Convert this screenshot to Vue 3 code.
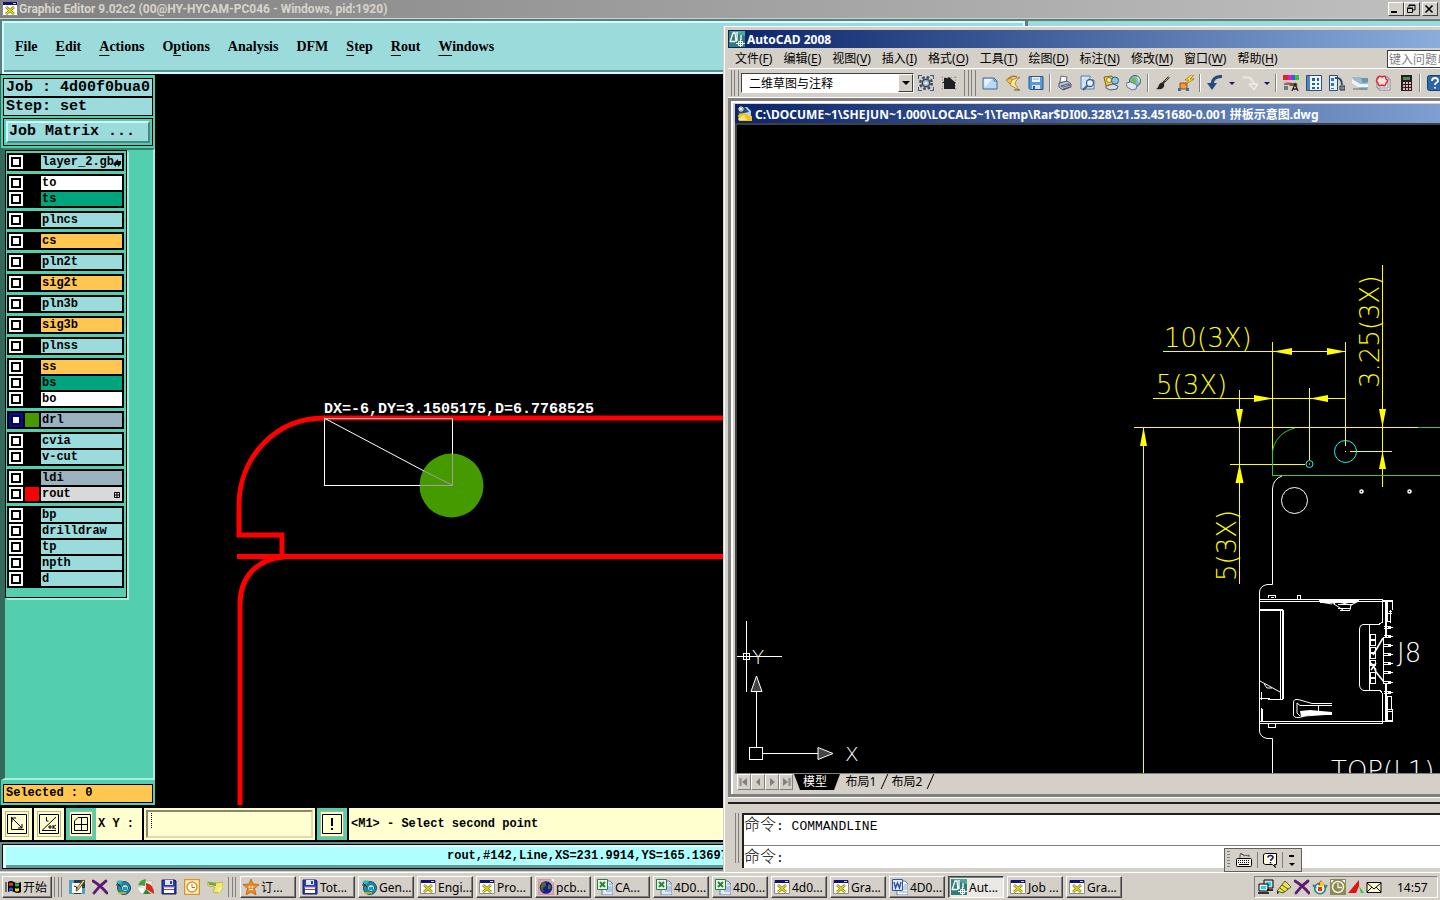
<template>
  <div class="desktop">
    <main class="workspace">
      <section class="editor">
        <header class="editor-title">
          <svg class="icon" viewBox="0 0 16 16" v-html="icons.xwin"></svg>
          <h1>Graphic Editor 9.02c2 (00@HY-HYCAM-PC046 - Windows, pid:1920)</h1>
          <div class="win-buttons">
            <button aria-label="Minimize"><svg viewBox="0 0 12 10"><path d="M2 8h6" stroke="#000" stroke-width="2" /></svg></button>
            <button aria-label="Restore"><svg viewBox="0 0 12 10"><path d="M4 3V1h6v5H8M4 1.5h6M2.5 4.500h5v4h-5zM2 4h6" fill="none" stroke="#000" /></svg></button>
            <button class="close" aria-label="Close"><svg viewBox="0 0 12 10"><path d="M2.500 1.500l7 7M9.500 1.500l-7 7" stroke="#000" stroke-width="1.600" /></svg></button>
          </div>
        </header>

        <div class="menu-row">
          <nav class="menubar">
            <button v-for="m in editorMenus" :key="m.join('')">{{ m[0] }}<u v-if="m[1]">{{ m[1] }}</u>{{ m[2] }}</button>
          </nav>
          <div class="menubar-side"></div>
        </div>

        <div class="editor-body">
          <aside class="sidebar">
            <div class="job-panel">
              <div class="job-line">Job : 4d00f0bua0</div>
              <div class="job-line">Step: set</div>
              <div class="matrix-frame">
                <button class="matrix-button">Job Matrix ...</button>
              </div>
            </div>
            <div class="layer-area">
              <div class="layer-panel">
                <div v-for="(group, g) in layerGroups" :key="g" class="layer-group">
                  <div v-for="layer in group" :key="layer.name" class="layer-row">
                    <input :id="'layer-' + layer.name" type="checkbox" :checked="layer.on" />
                    <span class="chip" :class="layer.chip"></span>
                    <label :for="'layer-' + layer.name" :class="layer.kind">{{ layer.name }}
                      <svg v-if="layer.mark === 'arrow'" class="mark" viewBox="0 0 8 8"><path d="M0 5l5-5v2h3v3L5 8V6H3v2z" fill="#000" /></svg>
                      <svg v-if="layer.mark === 'grid'" class="mark" viewBox="0 0 8 8"><path d="M1.500 1.500h5v5h-5zM4 1v6M1 4h6" fill="none" stroke="#000" /></svg>
                    </label>
                  </div>
                </div>
              </div>
            </div>
            <div class="selected-panel"><div class="selected-line">Selected : 0</div></div>
          </aside>

          <div class="editor-canvas">
            <svg width="1285" height="730" viewBox="155 75 1285 730">
              <g fill="none" stroke="#f00" stroke-width="5">
                <path d="M724 418H324C275 418 239 458 239 505V535H282V556M237 556.500H724M284 557C256 559 240 578 240 604V805" />
              </g>
              <circle cx="451.500" cy="485.500" r="32" fill="#459a00" />
              <g fill="none" stroke="#fff" shape-rendering="crispEdges">
                <path d="M324.500 418.500V485.500H420M452.500 418.500V454" />
                <path d="M324.500 418.500H452.500" stroke="#7cc" />
                <path d="M420 485.500H452.500V454" stroke="#a9a" />
              </g>
              <path d="M324 418L424 471" stroke="#fff" />
              <path d="M424 471L452 485" stroke="#a9a" />
              <text x="324" y="413" class="measure">DX=-6,DY=3.1505175,D=6.7768525</text>
            </svg>
          </div>
        </div>

        <div class="entry-row">
          <button class="tool" aria-label="Snap to vector">
            <svg viewBox="0 0 20 20"><path d="M.5.5h19v19H.5zM4.500 3v12.500H17M5 4l10 10M5 8V4h4M11 14h4v-4" fill="none" stroke="#000" /></svg>
          </button>
          <button class="tool" aria-label="Angle entry">
            <svg viewBox="0 0 20 20"><path d="M.5.5h19v19H.5zM17 3L3 16.500h14M7.500 3v4h2M10 12h2v2h-2zM14 11v4M17 11l-3 2 3 2" fill="none" stroke="#000" /></svg>
          </button>
          <button class="tool active" aria-label="Grid">
            <svg viewBox="0 0 20 20"><path d="M.5.5h19v19H.5zM7 3.500h9.500v13h-13V7L7 3.500M10.500 3.500v13M3.500 10.500h13" fill="none" stroke="#000" /></svg>
          </button>
          <label class="xy-label" for="xy">X Y :</label>
          <div class="xy-frame">
            <input id="xy" type="text" />
            <span class="caret"></span>
          </div>
          <button class="tool active" aria-label="Message">
            <svg viewBox="0 0 20 20"><path d="M.5.5h19v19H.5z" fill="none" stroke="#000" /><path d="M10 4v8M10 14v2" stroke="#000" stroke-width="2" /></svg>
          </button>
          <output class="message">&lt;M1&gt; - Select second point</output>
        </div>

        <div class="status-row">
          <div class="status-panel">rout,#142,Line,XS=231.9914,YS=165.13697,</div>
        </div>
      </section>

      <section class="acad">
        <header class="acad-title">
          <svg class="icon" viewBox="0 0 16 16" v-html="icons.acad"></svg>
          <h2>AutoCAD 2008</h2>
        </header>
        <div class="acad-menu">
          <nav>
            <button v-for="m in acadMenus" :key="m[0]">{{ m[0] }}(<u>{{ m[1] }}</u>)</button>
          </nav>
          <input class="help-box" type="text" aria-label="帮助" value="键入问题以寻求帮助" />
        </div>
        <div class="acad-toolbar">
          <span class="grip"></span>
          <div class="combo">
            <select aria-label="工作空间"><option>二维草图与注释</option></select>
            <span class="combo-arrow"></span>
          </div>
          <button class="tb" aria-label="工作空间设置"><svg viewBox="0 0 16 16" v-html="icons.gear"></svg></button>
          <button class="tb" aria-label="我的工作空间"><svg viewBox="0 0 16 16" v-html="icons.home"></svg></button>
          <span class="grip second"></span>
          <template v-for="(t, i) in toolbar" :key="i">
            <span v-if="t === '|'" class="tb-sep"></span>
            <button v-else-if="t === 'v'" class="tb-drop" aria-label="列表"></button>
            <button v-else class="tb" :aria-label="t"><svg viewBox="0 0 16 16" v-html="icons[t]"></svg></button>
          </template>
        </div>

        <div class="mdi">
          <div class="doc">
            <header class="doc-title">
              <svg class="icon" viewBox="0 0 16 16" v-html="icons.dwg"></svg>
              <h3>C:\DOCUME~1\SHEJUN~1.000\LOCALS~1\Temp\Rar$DI00.328\21.53.451680-0.001 拼板示意图.dwg</h3>
            </header>
            <div class="doc-canvas">
              <svg width="703" height="648" viewBox="737 125 703 648">
                <g fill="none" stroke="#ff0" shape-rendering="crispEdges">
                  <path d="M1163 351.500H1346M1153 398.500H1345M1272.500 342V450M1345.500 342V446M1309.500 388V460M1239.500 390V584" />
                  <path d="M1134 427.500H1418M1143.500 428V773M1230 464.500H1305M1382.500 265V487M1350 451.500H1392" />
                </g>
                <g fill="#ff0">
                  <path d="M1273 351.500l19-3.500v7zM1346 351.500l-19-3.500v7zM1273 398.500l-19-3.500v7zM1310 398.500l18-3.500v7z" />
                  <path d="M1239.500 427l-3.500-18h7zM1239.500 464l-4 19h8zM1382.500 427l-3.500-18h7zM1382.500 451l-3.500 18h7zM1143.500 427l-3.500 19h7z" />
                </g>
                <g class="cad-text yellow">
                  <text x="1164" y="347">10(3X)</text>
                  <text x="1156" y="394">5(3X)</text>
                  <text transform="translate(1379 388) rotate(-90)">3.25(3X)</text>
                  <text transform="translate(1236 581) rotate(-90)">5(3X)</text>
                </g>
                <g fill="none" stroke="#3c3">
                  <path d="M1295 428C1282 431 1273 441 1272.500 453" />
                  <path d="M1272.500 450V475.500H1440M1418 427.500H1440" shape-rendering="crispEdges" />
                </g>
                <g fill="none" stroke="#3ee">
                  <circle cx="1345.500" cy="451.500" r="11" />
                  <circle cx="1309.500" cy="464" r="3.500" />
                </g>
                <path d="M1345 451h1v1h-1zM1309 463.500h1v1h-1z" fill="#fff" />
                <g fill="none" stroke="#fff">
                  <path d="M1282 476Q1273 479 1272.500 489V584.500H1267Q1260 586 1259.500 592V731Q1260 737 1267 738.500H1272.500V773" />
                  <circle cx="1294.500" cy="500.500" r="13" />
                  <circle cx="1361.500" cy="491.500" r="1.500" stroke-width="1.600" />
                  <circle cx="1409.500" cy="491.500" r="1.500" stroke-width="1.600" />
                </g>
                <g fill="none" stroke="#fff" shape-rendering="crispEdges">
                  <path d="M1260 599.500H1383M1260 601.500H1382M1260 721.500H1383M1260 723.500H1383M1382.500 599V623M1382.500 694V724" />
                  <path d="M1268.500 598V595.500H1275.500V598M1271 597.500h3M1297.500 599V595.500H1300.500V599M1268.500 724V727.500H1275.500V724" />
                  <path d="M1260 609.500H1283M1260 610.500H1283M1280.500 611V699M1282.500 610V699M1283.500 610V699M1268 699.500H1283M1260 698.500H1270M1261.500 692V700M1261.500 708V722M1262.500 709V722" />
                  <path d="M1319 600.500H1359M1320 602.500H1356M1334.500 601V605M1338 604.500H1353M1338 608.500H1350M1340 610.500H1350" />
                  <path d="M1383 600.500H1393M1383 601.500H1393M1392.500 600V610M1385.500 600V637M1386.500 600V637M1387.500 600V622M1390.500 610V622.500M1385 621.500H1391M1388 613.500H1392M1389 611.500H1392" />
                  <path d="M1385.500 684V722M1386.500 684V722M1387.500 697V722M1385 696.500H1391.500V709M1392.500 709V722M1388 709.500H1392M1388 711.500H1392M1383 721.500H1393M1385 720.500H1393" />
                  <path d="M1383.500 637V684M1369.500 624V690M1363 624.500H1379L1382 622M1363 690.500H1380L1383 694" />
                  <path v-for="y in pinRows" :key="y" :d="`M1384 ${y - 1}.500H1391M1384 ${y + 1}.500H1391M1388 ${y}.500H1393`" />
                  <path v-for="y in padRows" :key="'p' + y" :d="`M1370.500 ${y}.500H1375.500V${y + 5}.500H1370.500Z`" />
                </g>
                <g fill="none" stroke="#fff">
                  <path d="M1363 624.500Q1359.500 625 1359.500 629V685Q1360 690 1364 690.500" />
                  <path d="M1383 638L1373 655M1373 664L1376 672L1384 682M1371 663l5 7M1376 663l-5 7" stroke-width="1.600" />
                  <path d="M1331 602L1343 610M1359 601L1351 605L1350 610M1338 602L1351 605M1320 602L1332 604" />
                  <path d="M1260 681L1280 692M1264 684l3 4h5" />
                  <path d="M1332 703.500H1312L1300 700Q1293 698 1293.500 703V714Q1293 718 1299 717.500L1305 716L1332 714M1332 705.500H1300L1297 703V713L1300 716M1318.500 705V711" />
                </g>
                <path d="M1300 711L1310 710L1332 712V715H1310L1301 717z" fill="#fff" />
                <g class="cad-text">
                  <text x="1397" y="662">J8</text>
                  <text x="1331" y="780">TOP(L1)</text>
                </g>
                <g class="ucs-text">
                  <text x="845" y="761">X</text>
                  <text x="752" y="664">Y</text>
                </g>
                <g fill="none" stroke="#fff" shape-rendering="crispEdges">
                  <path d="M746.500 621V692M737 656.500H782M743.500 653.500H749.500V659.500H743.500zM756.500 691V747M762 753.500H818M749.500 747.500H762.500V759.500H749.500z" />
                </g>
                <path d="M756.500 676l-5.500 15.500h11zM833 753.500l-15-6v12z" fill="#444" stroke="#fff" />
              </svg>
            </div>
            <div class="tabs">
              <button class="nav-btn" aria-label="第一个"><svg viewBox="0 0 12 12"><path d="M2 2v8M3 2v8" stroke="#808080" /><path d="M9 2v8L4 6z" fill="#808080" /></svg></button>
              <button class="nav-btn" aria-label="上一个"><svg viewBox="0 0 12 12"><path d="M8 2v8L4 6z" fill="#808080" /></svg></button>
              <button class="nav-btn" aria-label="下一个"><svg viewBox="0 0 12 12"><path d="M4 2v8l5-4z" fill="#808080" /></svg></button>
              <button class="nav-btn" aria-label="最后一个"><svg viewBox="0 0 12 12"><path d="M10 2v8M9 2v8" stroke="#808080" /><path d="M3 2v8l5-4z" fill="#808080" /></svg></button>
              <button class="tab current">模型</button>
              <button class="tab">布局1</button>
              <button class="tab">布局2</button>
            </div>
          </div>
        </div>

        <div class="cmd">
          <span class="grip"></span>
          <div class="cmd-box">
            <div class="cmd-log"><span class="han">命令</span>: COMMANDLINE</div>
            <div class="cmd-line"><label for="cmd"><span class="han">命令</span>:</label><input id="cmd" type="text" /></div>
          </div>
        </div>
      </section>

      <div class="langbar">
        <span class="dots"></span>
        <button aria-label="键盘"><svg viewBox="0 0 16 16" v-html="icons.keyboard"></svg></button>
        <button aria-label="帮助"><svg viewBox="0 0 16 16" v-html="icons.imehelp"></svg></button>
        <button class="narrow" aria-label="选项"><svg viewBox="0 0 16 16"><path d="M5 4h5" stroke="#000" stroke-width="2" /><path d="M5 11h6l-3 3z" /></svg></button>
      </div>
    </main>

    <footer class="taskbar">
      <button class="start">
        <svg class="icon" viewBox="0 0 16 16" v-html="icons.windows"></svg>开始
      </button>
      <span class="task-sep"></span>
      <div class="quick">
        <a v-for="q in quickLaunch" :key="q" href="#" :aria-label="q"><svg viewBox="0 0 16 16" v-html="icons[q]"></svg></a>
      </div>
      <span class="task-sep"></span>
      <div class="tasks">
        <button v-for="(t, i) in tasks" :key="i" class="task" :class="{ pressed: t.active }">
          <svg class="icon" viewBox="0 0 16 16" v-html="icons[t.icon]"></svg>{{ t.label }}
        </button>
      </div>
      <div class="tray">
        <svg v-for="t in tray" :key="t" viewBox="0 0 16 16" v-html="icons[t]"></svg>
        <time>14:57</time>
      </div>
    </footer>
  </div>
</template>

<script setup>
// [before, underlined letter, after]
const editorMenus = [
  ['', 'F', 'ile'],
  ['', 'E', 'dit'],
  ['', 'A', 'ctions'],
  ['O', 'p', 'tions'],
  ['Analysis', '', ''],
  ['DFM', '', ''],
  ['', 'S', 'tep'],
  ['', 'R', 'out'],
  ['', 'W', 'indows']
]

const acadMenus = [
  ['文件', 'F'],
  ['编辑', 'E'],
  ['视图', 'V'],
  ['插入', 'I'],
  ['格式', 'O'],
  ['工具', 'T'],
  ['绘图', 'D'],
  ['标注', 'N'],
  ['修改', 'M'],
  ['窗口', 'W'],
  ['帮助', 'H']
]

const layerGroups = [
  [{ name: 'layer_2.gb', kind: 'misc', mark: 'arrow' }],
  [{ name: 'to', kind: 'silk' }, { name: 'ts', kind: 'mask' }],
  [{ name: 'plncs', kind: 'misc' }],
  [{ name: 'cs', kind: 'signal' }],
  [{ name: 'pln2t', kind: 'misc' }],
  [{ name: 'sig2t', kind: 'signal' }],
  [{ name: 'pln3b', kind: 'misc' }],
  [{ name: 'sig3b', kind: 'signal' }],
  [{ name: 'plnss', kind: 'misc' }],
  [{ name: 'ss', kind: 'signal' }, { name: 'bs', kind: 'mask' }, { name: 'bo', kind: 'silk' }],
  [{ name: 'drl', kind: 'drill', chip: 'green', on: true }],
  [{ name: 'cvia', kind: 'misc' }, { name: 'v-cut', kind: 'misc' }],
  [{ name: 'ldi', kind: 'drill' }, { name: 'rout', kind: 'rout', chip: 'red', mark: 'grid' }],
  [
    { name: 'bp', kind: 'misc' },
    { name: 'drilldraw', kind: 'misc' },
    { name: 'tp', kind: 'misc' },
    { name: 'npth', kind: 'misc' },
    { name: 'd', kind: 'misc' }
  ]
]

const pinRows = [627, 636, 645, 654, 663, 672, 682, 692]
const padRows = [634, 640, 647, 653, 660, 672, 678]

const toolbar = [
  'new', 'open', 'floppy', '|', 'print', 'preview', 'publish', 'web', '|',
  'brush', 'match', '|', 'undo', 'v', 'redo', 'v', '|',
  'palette', 'center', 'toolpal', 'sheet', 'markup', 'calc', '|', 'help'
]

const quickLaunch = ['notes', 'cross', 'genesis', 'pinwheel', 'disk', 'clock', 'sticky']

const tasks = [
  { label: '订...', icon: 'star' },
  { label: 'Tot...', icon: 'disk' },
  { label: 'Gen...', icon: 'genesis' },
  { label: 'Engi...', icon: 'xwin' },
  { label: 'Pro...', icon: 'xwin' },
  { label: 'pcb...', icon: 'globe' },
  { label: 'CA...', icon: 'excel' },
  { label: '4D0...', icon: 'excel' },
  { label: '4D0...', icon: 'excel' },
  { label: '4d0...', icon: 'xwin' },
  { label: 'Gra...', icon: 'xwin' },
  { label: '4D0...', icon: 'word' },
  { label: 'Aut...', icon: 'acad', active: true },
  { label: 'Job ...', icon: 'xwin' },
  { label: 'Gra...', icon: 'xwin' }
]

const tray = ['network', 'pencil', 'cross', 'teapot', 'clock2', 'flag', 'mail']

const icons = {
  xwin: '<path d="M0 1h16v14H0z" fill="#fff"/><path d="M.5 1.500h15v13H.5z" fill="none" stroke="#8a8a8a"/><path d="M1 1h14v3H1z" fill="#10107a"/><path d="M11 2h3v1h-3z" fill="#ccc"/><path d="M4 6l8 7M12 6l-8 7" stroke="#7a7200" stroke-width="2.600"/><path d="M4 6l8 7M12 6l-8 7" stroke="#e6dc28" stroke-width="1.400"/>',
  acad: '<path d="M0 0h16v16H0z" fill="#2f7f78"/><path d="M0 0h16v5L9 3z" fill="#4fa89f"/><path d="M1 11L4 2h2l1 9M1 10.500h5M8 1v9M12 4v5" fill="none" stroke="#fff" stroke-width="1.300"/><path d="M11.500 8v8M7 12.500h9M9.500 10.500h4v4h-4z" fill="none" stroke="#fff"/>',
  dwg: '<path d="M2 1h8l4 4v10H2z" fill="#b9d4ee"/><path d="M1 9l6-3 3 3 5 1v5H2z" fill="#f5c21c"/><path d="M1 13l6-4 3 5H2z" fill="#ffe675"/><path d="M8 1l4 5-5 1-6 1 2-7z" fill="#2c4c74"/><path d="M4 0v6M1 3h6M2 1l4 4M6 1L2 5" stroke="#fff"/>',
  gear: '<path d="M0 0h4v1H1v3H0zM12 0h4v4h-1V1h-3zM0 12h1v3h3v1H0zM15 12h1v4h-4v-1h3z" fill="#2d5f94"/><circle cx="8" cy="8" r="5.800" fill="none" stroke="#3b4a5b" stroke-width="2.400" stroke-dasharray="2.600 1.950"/><circle cx="8" cy="8" r="3.800" fill="#9fb9d0" stroke="#3b4a5b" stroke-width="1.500"/><circle cx="8" cy="8" r="1.600" fill="#e8eef4"/>',
  home: '<path d="M1.500 1v14M14.500 1v14M0 2.500h16M0 13.500h16" stroke="#aaa" stroke-dasharray="2 1"/><path d="M8 2l7 6h-1v6H3V8H1z" fill="#1d1f22"/><path d="M3 3h3v4H3z" fill="#1d1f22"/>',
  new: '<path d="M1 3h11l3 3v8H1z" fill="#b7d9f5" stroke="#3d6a9c"/><path d="M2 4h8L3 12z" fill="#e9f5ff"/><path d="M12 3l3 3h-3z" fill="#fff" stroke="#3d6a9c"/>',
  open: '<path d="M1 5l4-2 3 2 3 8-5-3z" fill="#f1c643" stroke="#9b7420" stroke-width=".8"/><path d="M7 5l8-3-4 4-1 3 4 6-9-5z" fill="#ffe9a0" stroke="#a97d1d" stroke-width=".8"/><path d="M3 4q4-4 9-2" fill="none" stroke="#b07a18" stroke-width="1.500"/><path d="M9 15l6 0" stroke="#555"/>',
  floppy: '<path d="M1 1.500h14v13H2l-1-1z" fill="#5c9bd0" stroke="#1f5a93"/><path d="M4 2h8v5H4z" fill="#eef6fc"/><path d="M4 10h8v4H4z" fill="#d7e3ec"/><path d="M5 11h2v3H5z" fill="#2c5d8c"/><path d="M5 4h6" stroke="#9ab"/>',
  print: '<path d="M4 1l6 1-1 6-6-1z" fill="#fff" stroke="#667"/><path d="M2 8l8-2 4 3v3l-8 3-4-3z" fill="#b9bed2" stroke="#4d5375"/><path d="M4 11l7-2 2 1-7 2zM6 14l7-2" fill="#eef" stroke="#4d5375"/>',
  preview: '<path d="M1 1h9l4 4v9H1z" fill="#cfe4f7" stroke="#5d7fa8"/><path d="M10 1v4h4" fill="#fff" stroke="#5d7fa8"/><circle cx="10" cy="8" r="3.500" fill="#e8f5ff" stroke="#3c6288" stroke-width="1.300"/><path d="M7.500 10.500L3 15" stroke="#3c6288" stroke-width="2"/>',
  publish: '<path d="M1 2l8-1 2 8-8 2z" fill="#f6c932" stroke="#8b641b"/><circle cx="6" cy="5" r="2.500" fill="#fff3a0" stroke="#7d8a3c"/><circle cx="12" cy="5.500" r="3.500" fill="#8cc4e6" stroke="#28618f"/><path d="M3 11l7-2 5 2-1 3-7 1-4-2z" fill="#d9dbe6" stroke="#555b78"/>',
  web: '<circle cx="9" cy="6" r="5.500" fill="#7bbde0" stroke="#2d6593"/><path d="M6 2q5 1 4 5t-3 3q-3-3-1-8z" fill="#7ab84c"/><path d="M11 2q3 2 2 5" stroke="#e5eb8b" fill="none" stroke-width="1.500"/><path d="M0 8l5-1 6 3-1 4-4 1-5-3z" fill="#e3e6ec" stroke="#63799b"/>',
  brush: '<path d="M14 2L7 9" stroke="#453219" stroke-width="2.200"/><path d="M8 8q-3-1-4 2t-3 4q5 1 7-1t1-4z" fill="#28241f"/><path d="M14 2l-4 4" stroke="#b09366"/>',
  match: '<path d="M2 8h7v6H2z" fill="#f29a3d" stroke="#a34b10"/><path d="M13 0L7 5h4L7 10l9-6h-4l4-4z" fill="#ffe04a" stroke="#a5720e" stroke-width=".8"/><path d="M0 13h3v3H0zM8 13h3v3H8z" fill="#2573b9"/>',
  undo: '<path d="M15 1.500Q6 1 5 9" fill="none" stroke="#244b86" stroke-width="3"/><path d="M0 8h10l-5 7z" fill="#244b86"/>',
  redo: '<path d="M1 2.500Q10 1 12 9" fill="none" stroke="#e6e4df" stroke-width="2.500"/><path d="M7 9h9l-4 6z" fill="#d9d6cf" stroke="#f8f8f6"/>',
  palette: '<path d="M0 0h5v5H0z" fill="#e32222"/><path d="M5 0h4v5H5z" fill="#c527d8"/><path d="M9 0h3v5H9z" fill="#2c62e8"/><path d="M12 0h4v5h-4z" fill="#39c42e"/><path d="M1 6l9 2 5 1-1 3-6-2z" fill="#c98e67"/><path d="M4 8h10v3H7z" fill="#84543a"/><path d="M1 9h4M1 12h4M1 14h4" stroke="#557" stroke-width="1.300"/><path d="M9 16l3-7 3 7M10 14h4" fill="none" stroke="#222" stroke-width="1.300"/>',
  center: '<path d="M.5.5h15v15H.5z" fill="#eef5fb" stroke="#2b4e7b"/><path d="M1 1h3v14H1z" fill="#4d84bb"/><path d="M6 3h3v3H6zM11 3h2v3h-2zM6 8h3v2H6zM11 8h2v2h-2zM6 12h3v2H6zM11 12h2v2h-2z" fill="#2c5d91"/>',
  toolpal: '<path d="M.5.5h8v15h-8z" fill="#e2eefa" stroke="#2b4e7b"/><path d="M2 3h3v3H2zM2 8h3v3H2zM2 13h3v1H2z" fill="#3b73ad"/><path d="M6 3q7-1 7 7" fill="none" stroke="#26466f" stroke-width="1.800"/><path d="M11 11h5v4h-5z" fill="#7a8ea3" stroke="#333"/>',
  sheet: '<path d="M0 2h8l8 5v8H8z" fill="#9db8cb"/><path d="M0 4l8 5h8v3H6L0 8z" fill="#eff5f8"/><path d="M9 3h7v4l-5 1z" fill="#6995b2"/><path d="M1 14h14" stroke="#577" />',
  markup: '<path d="M4 4h11v11H4z" fill="#fff" stroke="#889"/><path d="M2 2h11v11H2z" fill="#f7f7f7" stroke="#889"/><path d="M3 3q1-3 4-1 4-2 4 2 3 2 0 4 0 4-4 2-4 2-4-2-3-2 0-5z" fill="#fbe2e2" stroke="#d02a2a" stroke-width="1.500"/>',
  calc: '<path d="M3 0h11v16H3z" fill="#2a1c1c"/><path d="M5 2h7v3H5z" fill="#4c8a5d"/><path d="M5 7h2v2H5zM8 7h2v2H8zM11 7h2v2h-2zM5 10h2v2H5zM8 10h2v2H8zM11 10h2v2h-2zM5 13h2v2H5zM8 13h2v2H8zM11 13h2v2h-2z" fill="#d9b9b9"/>',
  help: '<rect x=".5" y=".5" width="15" height="15" rx="2" fill="#2c67a9" stroke="#174273"/><path d="M5 6q0-3 3-3t3 3q0 1-2 2-1 1-1 2M8 12v1.500" fill="none" stroke="#fff" stroke-width="1.800"/>',
  keyboard: '<path d="M4 6V3l1-2 1 2 1-1 1 2 2-1 1 1 2-1v2" fill="none" stroke="#222" stroke-width=".7"/><rect x=".5" y="6.500" width="15" height="8" rx="1" fill="#f4f4ee" stroke="#000"/><path d="M2 8.500h12M2 10.500h12" stroke="#000" stroke-dasharray="1 1"/><path d="M3 12.500h10" stroke="#000"/>',
  imehelp: '<path d="M3.500 1.500h11v11h-2l1 3-3-3h-7l-2-1v-9z" fill="#ffffdf" stroke="#000"/><path d="M6 5.500q0-2 2.500-2t2.500 2q0 1-2 2.200V9M8.500 10v1.500" fill="none" stroke="#14147c" stroke-width="1.600"/>',
  windows: '<path d="M0 4h2M0 6h2M0 8h2M0 10h2M0 12h2" stroke="#000"/><path d="M3 3q3-2 6 0v10q-3-2-6 0zM9 3q3 2 7 0v10q-3 2-7 0z" fill="#000"/><path d="M4 4q2-1 4 0v3q-2-1-4 0z" fill="#e2371d"/><path d="M10 4q2 1 4 0v3q-2 1-4 0z" fill="#2fae2f"/><path d="M4 9q2-1 4 0v3q-2-1-4 0z" fill="#2b50d8"/><path d="M10 9q2 1 4 0v3q-2 1-4 0z" fill="#f5d916"/>',
  notes: '<path d="M0 1h16v14H0z" fill="#1c3e5a"/><path d="M0 1h5v14H0zM12 9h4v6h-4z" fill="#4f9fc9"/><path d="M3 4h10v10H3z" fill="#fdf9e4"/><path d="M14 1l2 1-7 9-2 1 1-3z" fill="#f7d36c" stroke="#4c3a12" stroke-width=".8"/><path d="M5 7q3 0 3 3" fill="none" stroke="#222"/>',
  cross: '<path d="M1 2q7 4 14 12M14 2Q7 7 2 14" fill="none" stroke="#5e1a70" stroke-width="2.800" stroke-linecap="round"/>',
  genesis: '<circle cx="9" cy="9" r="6.500" fill="#1d8e98" stroke="#114e6b"/><circle cx="10" cy="9" r="3.500" fill="#bfeef0" stroke="#1c55a5"/><path d="M8 8h4v3H8z" fill="#18a2a8"/><path d="M1 3q3-3 7-1L5 6z" fill="#34b7c0"/><path d="M2 4l4 4M1 6h4" stroke="#123" /><path d="M3 14h8" stroke="#d7b42a" stroke-width="1.500"/>',
  pinwheel: '<path d="M2 2h12v12H2z" fill="#f3f1ea" stroke="#aaa" stroke-width=".6"/><path d="M8 0L7 7 0 6q2-5 8-6z" fill="#3fa335"/><path d="M8 4q8 1 8 11l-8-5z" fill="#da2a1c"/><path d="M0 8l7 1-2 6q-5-2-5-7z" fill="#fff" stroke="#c9c9c9" stroke-width=".5"/><path d="M5 15l3-5 5 5z" fill="#2d8a2a"/>',
  disk: '<path d="M1 1h13l1 1v13H1z" fill="#2a3ba8" stroke="#131d68"/><path d="M4 1h8v5H4z" fill="#dfe4f4"/><path d="M9 2h2v3H9z" fill="#2a3ba8"/><path d="M3 8h10v6H3z" fill="#fff"/><path d="M3 10.500h10" stroke="#cf2d2d"/><path d="M2 8h12" stroke="#7d8ce0"/>',
  clock: '<rect x=".5" y=".5" width="15" height="15" rx="1" fill="#fdf0cf" stroke="#dc951b" stroke-width="1.600"/><circle cx="8" cy="8" r="5" fill="#fff" stroke="#dc951b" stroke-width="1.500"/><path d="M8 5v3.500h3" fill="none" stroke="#b8740a"/>',
  sticky: '<path d="M0 3l9 1 7-1v6l-4 5-6-1 2-5-7-1z" fill="#f4ea6a" stroke="#b1a238" stroke-width=".7"/><path d="M1 3l8 1v3L2 6z" fill="#6fa847"/><path d="M12 14l4-6-5 2z" fill="#fff7ab"/>',
  star: '<path d="M8 0l2 5 6 .5-4.500 4L13 16l-5-3-5 3 1.500-6.500L0 5.500 6 5z" fill="#f08a24" stroke="#b3530c" stroke-width=".7"/><circle cx="6.500" cy="8" r=".9" fill="#fff"/><circle cx="9.500" cy="8" r=".9" fill="#fff"/><path d="M6 10.500h4" stroke="#fff"/>',
  globe: '<path d="M0 0h16v16H0z" fill="#c7b4b4"/><path d="M.5.5h15v15H.5z" fill="none" stroke="#e28f8f"/><circle cx="8" cy="8.500" r="6.300" fill="#14208f"/><path d="M4 4q4-2 4 1t-2 3 0 5q-4-2-3-6zM10 6q3-1 3 2t-3 2z" fill="#5a6b1d"/><path d="M13 0h3v4z" fill="#fff"/>',
  excel: '<path d="M5 2h8l3 3v11H5z" fill="#dfe9f8" stroke="#5f7fae"/><path d="M12 5h3M9 8h6M9 10h6M9 12h6" stroke="#86a2c9"/><path d="M.5.5h10v10H.5z" fill="#e9f5e7" stroke="#2f7d3a"/><path d="M3 3l5 5M8 3L3 8" stroke="#23823a" stroke-width="1.900"/>',
  word: '<path d="M5 2h8l3 3v11H5z" fill="#fff" stroke="#5f7fae"/><path d="M12 6h3M11 8h4M11 10h4M7 13h8" stroke="#86a2c9"/><path d="M.5.5h10v11H.5z" fill="#e4ecfb" stroke="#2b55a8"/><path d="M2 3l1.500 6 2-5 2 5L9 3" fill="none" stroke="#2b4fa5" stroke-width="1.400"/>',
  network: '<path d="M6 1h9v8H6z" fill="#d8d8d8" stroke="#000"/><path d="M8 3h5v4H8z" fill="#19d5e8"/><path d="M1 5h9v7H1z" fill="#e8e8e8" stroke="#000"/><path d="M3 7h5v3H3z" fill="#19d5e8"/><path d="M0 14h11M9 11h6" stroke="#000" stroke-width="1.500"/>',
  pencil: '<path d="M1 12L9 2l6 6-8 6z" fill="#ece24a" stroke="#5e5610"/><path d="M4 9l5 4M6 6l6 4" stroke="#5e5610"/><path d="M1 12l2 2-2 1z" fill="#000"/><path d="M10 4l4 4" stroke="#fff"/>',
  teapot: '<circle cx="8" cy="9.500" r="5.300" fill="#f4efc9" stroke="#18878a" stroke-width="1.600"/><path d="M6 6l3-5 1 6z" fill="#e32b1e"/><path d="M8 3h4v4H8z" fill="#f2c624"/><path d="M1 6l3 3M15 6l-2 3" stroke="#18878a" stroke-width="2"/><path d="M6 8h4v4H6z" fill="#d3401f"/>',
  clock2: '<path d="M0 0h16v16H0z" fill="#8b8a54"/><circle cx="8" cy="8" r="5.500" fill="#8b8a54" stroke="#f1f0dc" stroke-width="1.500"/><path d="M8 4v4.500h4" fill="none" stroke="#f1f0dc" stroke-width="1.300"/><path d="M1 1h3L1 4zM15 1h-3l3 3z" fill="#fff"/>',
  flag: '<path d="M11 1v6l-3 7H0z" fill="#e01414"/><path d="M11 7l5 7h-3z" fill="#22c933"/>',
  mail: '<path d="M1 3.500h14v10H1z" fill="#fff8c9" stroke="#000"/><path d="M1 4l7 6 7-6M1 13l5-5M15 13l-5-5" fill="none" stroke="#000"/>'
}
</script>

<style>
body {
  background: #000;
}
</style>

<style scoped>
.desktop {
  display: flex;
  flex-direction: column;
  height: 100vh;
  overflow: hidden;
  font-family: "Noto Sans", "Noto Sans CJK SC", sans-serif;
  font-size: 12px;
  color: #000;
}

button,
input,
select {
  font: inherit;
  color: inherit;
  margin: 0;
  padding: 0;
  border: 0;
  border-radius: 0;
  background: none;
  box-sizing: border-box;
}

h1,
h2,
h3 {
  margin: 0;
  font-size: 12px;
  font-weight: 700;
  white-space: nowrap;
}

svg {
  display: block;
  flex: none;
}

.icon {
  width: 16px;
  height: 16px;
}

.workspace {
  position: relative;
  flex: 1;
  min-height: 0;
}

/* graphic editor */
.editor {
  display: flex;
  flex-direction: column;
  height: 100%;
  font-family: "Liberation Mono", monospace;
  font-weight: 700;
}

.editor-title {
  display: flex;
  align-items: center;
  gap: 1px;
  height: 18px;
  padding: 0 2px;
  background: linear-gradient(90deg, #808080, #c0c0c0);
  color: #d8d4cc;
  font-family: Roboto, sans-serif;
}

.editor-title h1 {
  flex: 1;
}

.win-buttons {
  display: flex;
}

.win-buttons button {
  width: 16px;
  height: 14px;
  background: #d4d0c8;
  border: 1px solid;
  border-color: #fff #404040 #404040 #fff;
}

.win-buttons svg {
  width: 12px;
  height: 10px;
}

.win-buttons .close {
  margin-left: 2px;
}

.menu-row {
  display: flex;
  gap: 3px;
  height: 57px;
  background: #5d7f7f;
  border-top: 1px solid #d4d0c8;
  border-bottom: 1px solid #000;
  box-sizing: border-box;
  padding: 2px 0 0 2px;
}

.menubar {
  flex: 1;
  display: flex;
  align-items: center;
  gap: 18px;
  padding: 0 0 1px 11px;
  background: #9bdbdb;
  border: 2px solid #cff;
  box-shadow: inset 0 -2px #5d8f8f;
  font-family: "Liberation Serif", serif;
  font-size: 14px;
}

.menubar u {
  text-underline-offset: 4px;
}

.menubar-side {
  width: 412px;
  background: #9bdbdb;
}

.editor-body {
  flex: 1;
  display: flex;
  min-height: 0;
}

.sidebar {
  display: flex;
  flex-direction: column;
  width: 155px;
  background: #53cfb0;
  box-sizing: border-box;
  border-left: 1px solid #2f6b5c;
}

.job-panel {
  padding: 3px 2px 2px;
  font-size: 15px;
}

.job-line {
  height: 19px;
  box-sizing: border-box;
  border: 1px solid #000;
  padding-left: 2px;
  line-height: 17px;
  background: #9bdbdb;
  white-space: nowrap;
}

.matrix-frame {
  margin-top: 2px;
  padding: 2px;
  border: 1px solid #000;
}

.matrix-button {
  display: block;
  width: 100%;
  height: 22px;
  padding-left: 1px;
  text-align: left;
  line-height: 18px;
  background: #9bdbdb;
  border: 2px solid;
  border-color: #cff #4d8585 #4d8585 #cff;
}

.layer-area {
  flex: 1;
  border-top: 2px solid #2f7f6b;
  border-left: 4px solid #35695c;
  border-right: 2px solid #a6efdc;
  border-bottom: 2px solid #a6efdc;
}

.layer-panel {
  display: flex;
  flex-direction: column;
  gap: 3px;
  width: 117px;
  padding: 2px 2px 9px 1px;
  border: 1px solid #000;
  box-shadow: 1px 1px #a6efdc, 2px 2px #a6efdc;
}

.layer-group {
  display: flex;
  flex-direction: column;
  background: #000;
  padding: 1px 2px 1px 2px;
}

.layer-row {
  display: flex;
  align-items: center;
  gap: 2px;
  height: 16px;
}

.layer-row input {
  appearance: none;
  width: 14px;
  height: 14px;
  border: 2px solid #fff;
  background: #fff;
  box-shadow: inset 0 0 0 2px #000;
}

.layer-row input:checked {
  border-color: #0a0a96;
  box-shadow: inset 0 0 0 2px #06065c;
}

.chip {
  width: 14px;
  height: 14px;
}

.chip.green {
  background: #459a00;
}

.chip.red {
  background: #f00;
}

.layer-row label {
  flex: 1;
  position: relative;
  height: 14px;
  padding-left: 1px;
  line-height: 14px;
  font-size: 12px;
  white-space: nowrap;
}

.misc {
  background: #9bdbdb;
}

.silk {
  background: #fff;
}

.mask {
  background: #00a57d;
}

.signal {
  background: #ffc74f;
}

.drill {
  background: #9bb3bf;
}

.rout {
  background: #d9d9d9;
}

.mark {
  position: absolute;
  right: 1px;
  top: 4px;
  width: 8px;
  height: 8px;
}

.selected-panel {
  padding: 4px 2px 2px;
}

.selected-line {
  height: 19px;
  box-sizing: border-box;
  border: 1px solid #000;
  padding-left: 2px;
  line-height: 17px;
  background: #ffc74f;
}

.editor-canvas {
  flex: 1;
  overflow: hidden;
  background: #000;
}

.measure {
  fill: #fff;
  font-size: 15px;
}

.entry-row {
  display: flex;
  gap: 2px;
  height: 37px;
  box-sizing: border-box;
  padding: 3px 0 2px 2px;
  background: #000;
}

.tool {
  display: flex;
  align-items: center;
  justify-content: center;
  width: 30px;
  background: #ffffcf;
  border: 3px solid #ffffcf;
  box-shadow: inset 0 0 0 1px #b5b58a;
}

.tool.active {
  border-color: #53cfb0;
}

.tool svg {
  width: 20px;
  height: 20px;
}

.xy-label {
  width: 46px;
  margin: 0 0 0 -2px;
  padding-left: 2px;
  box-sizing: border-box;
  background: #ffffcf;
  line-height: 32px;
}

.xy-frame {
  position: relative;
  width: 171px;
  box-sizing: border-box;
  padding: 2px;
  background: #ffffcf;
}

.xy-frame input {
  width: 100%;
  height: 100%;
  padding-left: 8px;
  border: 2px solid;
  border-color: #8a8a6a #dcdcb0 #dcdcb0 #8a8a6a;
}

.caret {
  position: absolute;
  left: 7px;
  top: 5px;
  height: 15px;
  border-left: 1px dotted #000;
}

.message {
  flex: 1;
  padding-left: 2px;
  line-height: 32px;
  background: #ffffcf;
}

.status-row {
  height: 30px;
  box-sizing: border-box;
  padding: 2px 0 2px 2px;
  background: #6c8c8c;
  border-bottom: 1px solid #d4d0c8;
}

.status-panel {
  height: 25px;
  box-sizing: border-box;
  border: 1px solid #000;
  border-right: 0;
  padding-left: 444px;
  line-height: 23px;
  background: #b0ffff;
  box-shadow: inset 3px 2px #d8ffff, inset 0 -3px #5f9b9b;
  white-space: nowrap;
}

/* AutoCAD */
.acad {
  position: absolute;
  left: 723px;
  right: 0;
  top: 26px;
  bottom: 0;
  display: flex;
  flex-direction: column;
  overflow: hidden;
  box-sizing: border-box;
  padding: 4px 0 0 4px;
  background: #d4d0c8;
  border-left: 1px solid #d4d0c8;
  box-shadow: inset 1px 1px #fff;
}

.acad-title {
  display: flex;
  align-items: center;
  gap: 2px;
  height: 18px;
  padding-left: 1px;
  background: linear-gradient(90deg, #0a246a, #8aaddc);
  color: #fff;
}

.acad-menu {
  display: flex;
  justify-content: space-between;
  height: 20px;
}

.acad-menu nav {
  display: flex;
  align-items: center;
  gap: 11px;
  padding-left: 7px;
}

.acad-menu u {
  text-underline-offset: 2px;
}

.help-box {
  width: 53px;
  height: 18px;
  margin-top: 2px;
  padding-left: 1px;
  background: #fff;
  border: 1px solid #404040;
  border-right: 0;
  color: #808080;
}

.acad-toolbar {
  display: flex;
  align-items: center;
  height: 28px;
  padding-left: 2px;
  border-top: 1px solid #fff;
  border-bottom: 1px solid #fff;
}

.grip {
  flex: none;
  width: 4px;
  height: 26px;
  box-sizing: border-box;
  margin: 0 6px 0 1px;
  border: solid;
  border-width: 0 1px;
  border-color: #fff #808080;
  box-shadow: 3px 0 #d4d0c8, 4px 0 #808080;
}

.grip.second {
  margin: 0 6px 0 8px;
  box-shadow: -3px 0 #d4d0c8, -4px 0 #808080, 3px 0 #d4d0c8, 4px 0 #808080;
}

.combo {
  display: flex;
  flex: none;
  width: 173px;
  height: 20px;
  box-sizing: border-box;
  border: 1px solid;
  border-color: #404040 #fff #fff #404040;
  background: #fff;
}

.combo select {
  flex: 1;
  appearance: none;
  padding-left: 7px;
}

.combo-arrow {
  width: 15px;
  background: #d4d0c8;
  border: 1px solid;
  border-color: #fff #404040 #404040 #fff;
  display: flex;
  align-items: center;
  justify-content: center;
  box-sizing: border-box;
}

.combo-arrow::after,
.tb-drop::after {
  content: "";
  border: solid transparent;
  border-width: 4px 4px 0;
  border-top-color: #000;
}

.tb {
  display: flex;
  align-items: center;
  justify-content: center;
  flex: none;
  width: 23px;
  height: 22px;
}

.tb svg {
  width: 16px;
  height: 16px;
}

.tb-drop {
  display: flex;
  justify-content: center;
  flex: none;
  width: 12px;
}

.tb-drop::after {
  border-width: 3px 3px 0;
  border-top-color: #14147c;
}

.tb-sep {
  flex: none;
  width: 1px;
  height: 18px;
  margin: 0 3px 0 2px;
  background: #808080;
  box-shadow: 1px 0 #fff;
}

.mdi {
  flex: 1;
  display: flex;
  min-height: 0;
  padding: 3px 0 3px 3px;
  background: #808080;
  border-bottom: 1px solid #fff;
}

.doc {
  flex: 1;
  display: flex;
  flex-direction: column;
  min-width: 0;
  padding: 3px 0 4px 4px;
  background: #d4d0c8;
  box-shadow: inset 2px 2px #fff;
}

.doc-title {
  display: flex;
  align-items: center;
  gap: 2px;
  height: 19px;
  padding-left: 2px;
  background: linear-gradient(90deg, #0a246a, #7e9fd0);
  color: #fff;
}

.doc-canvas {
  flex: 1;
  min-height: 0;
  overflow: hidden;
  background: #000;
  border: solid #404040;
  border-width: 2px 0 0 2px;
}

.cad-text {
  font-family: "DejaVu Sans", sans-serif;
  font-weight: 200;
  font-size: 26px;
  fill: #fff;
}

.cad-text.yellow {
  fill: #ff0;
}

.ucs-text {
  font-family: "DejaVu Sans", sans-serif;
  font-weight: 200;
  font-size: 20px;
  fill: #fff;
}

.tabs {
  display: flex;
  height: 16px;
  padding-left: 2px;
  border-top: 1px solid #808080;
}

.nav-btn {
  display: flex;
  align-items: center;
  justify-content: center;
  width: 14px;
  border: 1px solid;
  border-color: #fff #808080 #808080 #fff;
}

.nav-btn svg {
  width: 12px;
  height: 12px;
}

.tab {
  position: relative;
  width: 46px;
  padding-right: 4px;
  line-height: 14px;
}

.tab::after {
  content: "";
  position: absolute;
  right: 1px;
  top: 0;
  height: 15px;
  border-right: 1px solid #000;
  transform: skewX(-24deg);
}

.tab.current {
  margin-left: 1px;
  background: #000;
  color: #fff;
  clip-path: polygon(0 0, 100% 0, 40px 100%, 6px 100%);
}

.cmd {
  display: flex;
  height: 70px;
  box-sizing: border-box;
  padding: 9px 0 4px 6px;
  margin-top: 4px;
  border-top: 2px solid #202020;
}

.cmd .grip {
  height: 50px;
  margin-right: 3px;
}

.cmd-box {
  flex: 1;
  display: flex;
  flex-direction: column;
  background: #fff;
  border: solid #202020;
  border-width: 2px 0 0 2px;
  font-family: "Liberation Mono", "Noto Sans CJK SC", monospace;
  font-size: 13px;
}

.cmd-log {
  height: 31px;
  line-height: 16px;
  border-bottom: 1px solid #808080;
}

.cmd-line {
  display: flex;
  flex: 1;
  line-height: 18px;
}

.cmd-line input {
  flex: 1;
}

.han {
  font-family: "Noto Sans CJK SC", sans-serif;
  font-weight: 300;
  font-size: 16px;
}

.langbar {
  position: absolute;
  right: 138px;
  bottom: 0;
  display: flex;
  align-items: center;
  width: 78px;
  height: 24px;
  box-sizing: border-box;
  padding-left: 2px;
  background: #d4d0c8;
  border: 1px solid #606060;
}

.langbar .dots {
  width: 3px;
  height: 18px;
  margin-right: 2px;
  background: repeating-linear-gradient(#808080 0 1px, transparent 1px 3px);
}

.langbar button {
  flex: 1;
  display: flex;
  justify-content: center;
  border-left: 1px solid #808080;
}

.langbar .narrow {
  flex: none;
  width: 19px;
}

.langbar .dots + button {
  border-left: 0;
}

.langbar svg {
  width: 16px;
  height: 16px;
}

/* taskbar */
.taskbar {
  display: flex;
  align-items: center;
  height: 28px;
  box-sizing: border-box;
  padding: 1px 2px 0;
  background: #d4d0c8;
  border-top: 1px solid #fff;
  position: relative;
}

.start,
.task {
  display: flex;
  align-items: center;
  gap: 2px;
  height: 22px;
  padding-left: 2px;
  white-space: nowrap;
  border: 1px solid;
  border-color: #fff #404040 #404040 #fff;
  box-shadow: inset -1px -1px #808080;
}

.start {
  width: 50px;
}

.task-sep {
  width: 4px;
  height: 20px;
  box-sizing: border-box;
  margin: 0 4px 0 6px;
  border: solid;
  border-width: 0 1px;
  border-color: #fff #808080;
  box-shadow: -3px 0 #d4d0c8, -4px 0 #808080;
}

.quick {
  display: flex;
  gap: 7px;
  padding: 0 3px 0 3px;
}

.quick svg,
.tray svg {
  width: 16px;
  height: 16px;
}

.tasks {
  flex: 1;
  display: flex;
  gap: 3px;
  min-width: 0;
}

.task {
  width: 56px;
}

.task.pressed {
  border-color: #404040 #fff #fff #404040;
  background: #ebe9e4;
  box-shadow: inset 1px 1px #808080;
}

.tray {
  display: flex;
  align-items: center;
  gap: 2px;
  width: 184px;
  height: 22px;
  box-sizing: border-box;
  padding-left: 3px;
  border: 1px solid;
  border-color: #808080 #fff #fff #808080;
}

.tray time {
  margin-left: 13px;
}
</style>
